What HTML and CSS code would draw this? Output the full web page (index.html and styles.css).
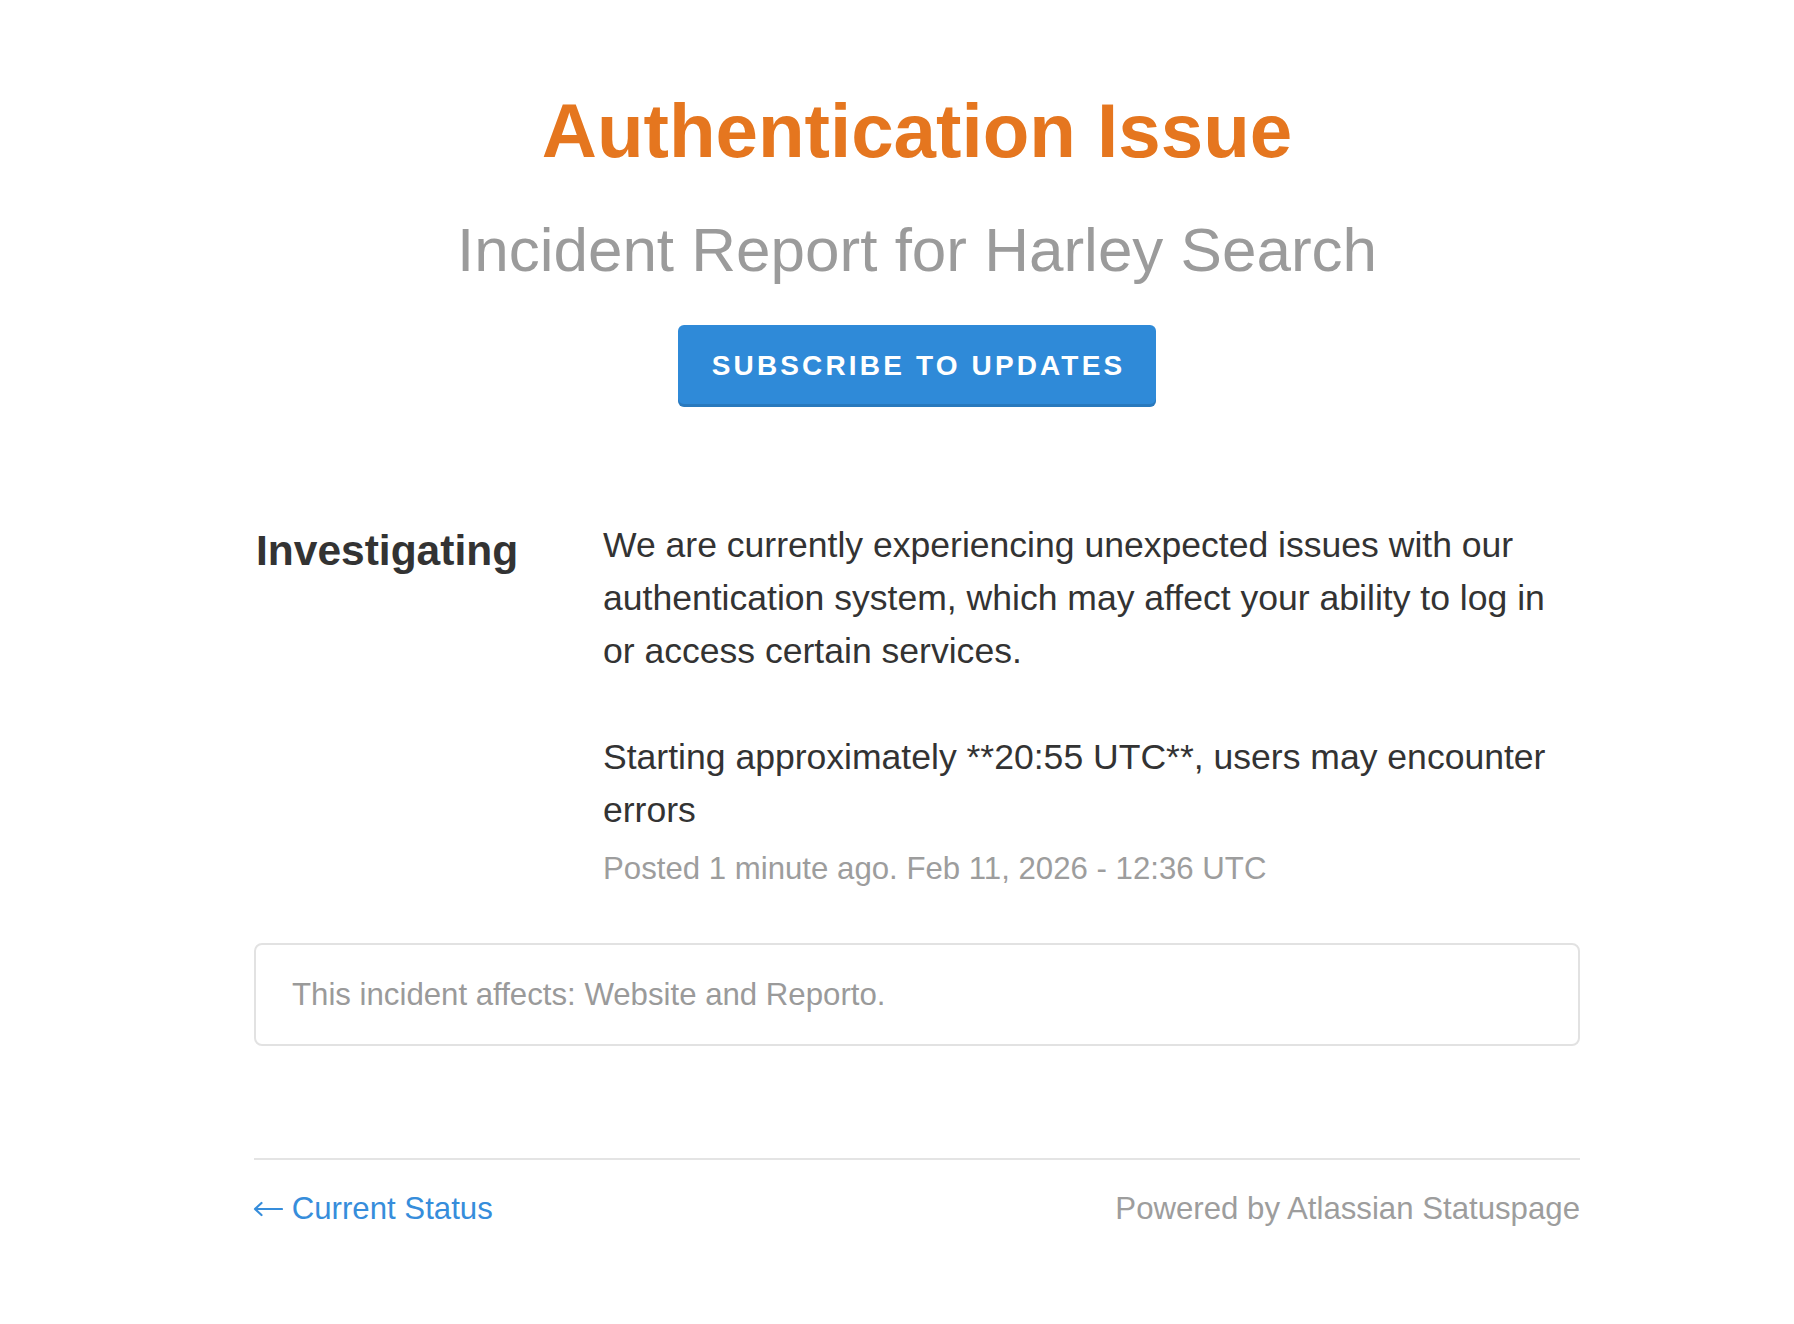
FILE: index.html
```html
<!DOCTYPE html>
<html lang="en">
<head>
<meta charset="utf-8">
<title>Authentication Issue</title>
<link rel="stylesheet" href="styles.css">
</head>
<body>
<div class="page">
  <header class="header">
    <h1 class="incident-name">Authentication Issue</h1>
    <div class="subheader">Incident Report for Harley Search</div>
    <a class="subscribe-button" href="#">Subscribe to Updates</a>
  </header>

  <section class="update">
    <h2 class="update-title">Investigating</h2>
    <div class="update-body">
      <p class="update-text">We are currently experiencing unexpected issues with our authentication system, which may affect your ability to log in or access certain services.</p>
      <p class="update-text">Starting approximately **20:55 UTC**, users may encounter errors</p>
      <div class="update-meta">Posted 1 minute ago. Feb 11, 2026 - 12:36 UTC</div>
    </div>
  </section>

  <div class="components-affected">This incident affects: Website and Reporto.</div>

  <footer class="footer">
    <a class="back-link" href="#"><svg class="back-arrow" width="30" height="16" viewBox="0 0 30 16" aria-hidden="true"><path d="M2 8 H29 M8.5 2 L2 8 L8.5 14" fill="none" stroke="currentColor" stroke-width="2.2" stroke-linecap="round" stroke-linejoin="round"/></svg> Current Status</a>
    <span class="powered">Powered by Atlassian Statuspage</span>
  </footer>
</div>
</body>
</html>
```

FILE: styles.css
```css
html, body {
  margin: 0;
  padding: 0;
  background: #ffffff;
}

body {
  font-family: "Liberation Sans", Arial, Helvetica, sans-serif;
  color: #333333;
}

.page {
  width: 1326px;
  margin-left: 254px;
  padding-top: 85px;
}

.header {
  display: flex;
  flex-direction: column;
  align-items: center;
  text-align: center;
}

.incident-name {
  margin: 0;
  font-size: 76.3px;
  line-height: 92px;
  font-weight: 700;
  color: #e5761f;
}

.subheader {
  margin-top: 36px;
  font-size: 62px;
  line-height: 1.2;
  color: #9b9b9b;
}

.subscribe-button {
  display: inline-block;
  margin-top: 38px;
  padding: 27px 31px 27px 34px;
  font-size: 28px;
  line-height: 1;
  font-weight: 700;
  letter-spacing: 3.15px;
  text-transform: uppercase;
  text-decoration: none;
  color: #ffffff;
  background: #2f8ad8;
  border-radius: 6px;
  box-shadow: inset 0 -3px 0 rgba(0, 0, 0, 0.12);
}

.update {
  display: grid;
  grid-template-columns: 349px 1fr;
  margin-top: 112px;
}

.update-title {
  margin: 0;
  padding-left: 2px;
  font-size: 42.5px;
  line-height: 63px;
  font-weight: 700;
  color: #333333;
}

.update-body {
  padding-right: 8px;
  font-size: 35.55px;
  line-height: 53px;
  color: #333333;
}

.update-text {
  margin: 0 0 53px 0;
}

.update-text + .update-text {
  margin-bottom: 0;
}

.update-meta {
  margin-top: 9px;
  font-size: 31.2px;
  line-height: 46px;
  color: #9d9d9d;
}

.components-affected {
  margin-top: 51px;
  padding: 27px 36px 26px;
  border: 2px solid #e2e2e2;
  border-radius: 8px;
  font-size: 31.2px;
  line-height: 46px;
  color: #9a9a9a;
}

.footer {
  display: flex;
  justify-content: space-between;
  align-items: baseline;
  margin-top: 112px;
  padding-top: 26px;
  border-top: 2px solid #e4e4e4;
  font-size: 31.2px;
  line-height: 46px;
}

.back-link {
  color: #368ddb;
  text-decoration: none;
}

.back-arrow {
  display: inline-block;
  vertical-align: 2px;
  margin-left: -1px;
}

.powered {
  color: #9d9d9d;
}
```
